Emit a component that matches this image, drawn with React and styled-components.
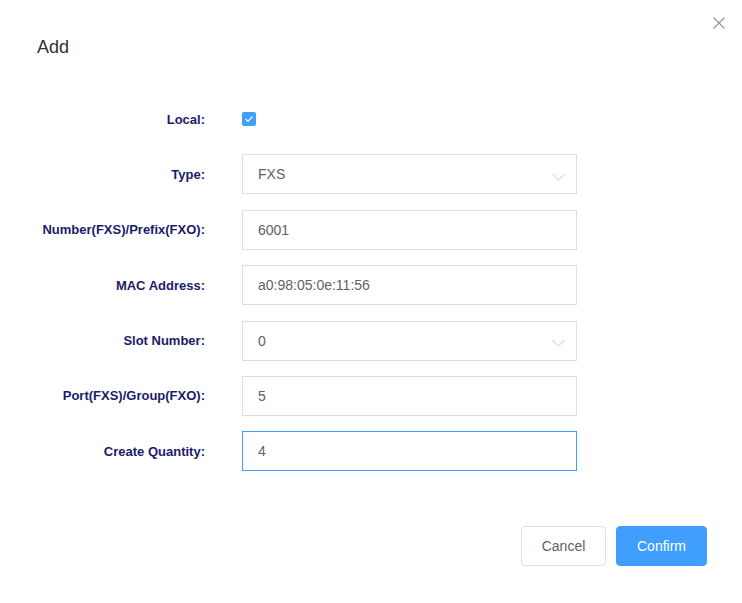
import React from "react";
import styled, { createGlobalStyle } from "styled-components";

const GlobalStyle = createGlobalStyle`
  html, body {
    margin: 0;
    padding: 0;
    background: #ffffff;
    font-family: "Liberation Sans", Arial, sans-serif;
  }
`;

const fields = [
  { label: "Type:", value: "FXS", kind: "select" },
  { label: "Number(FXS)/Prefix(FXO):", value: "6001", kind: "input" },
  { label: "MAC Address:", value: "a0:98:05:0e:11:56", kind: "input" },
  { label: "Slot Number:", value: "0", kind: "select" },
  { label: "Port(FXS)/Group(FXO):", value: "5", kind: "input" },
  { label: "Create Quantity:", value: "4", kind: "input", focused: true },
];

const Chevron = () => (
  <svg width="13" height="8" viewBox="0 0 13 8">
    <path d="M0.5 1 L6.5 7 L12.5 1" fill="none" stroke="#c0c4cc" strokeWidth="1" />
  </svg>
);

const CloseIcon = () => (
  <svg width="12" height="12" viewBox="0 0 12 12">
    <path d="M0.5 0.5 L11.5 11.5 M11.5 0.5 L0.5 11.5" stroke="#909399" strokeWidth="1.1" />
  </svg>
);

const CheckIcon = () => (
  <svg width="10" height="8" viewBox="0 0 10 8">
    <path d="M1.5 4 L4 6.5 L8.5 1.5" fill="none" stroke="#ffffff" strokeWidth="1.2" />
  </svg>
);

const App = () => {
  return (
    <Dialog>
      <GlobalStyle />
      <Header>
        <Title>Add</Title>
        <CloseButton aria-label="close">
          <CloseIcon />
        </CloseButton>
      </Header>
      <Form>
        <Row>
          <Label>Local:</Label>
          <Field>
            <Checkbox>
              <CheckIcon />
            </Checkbox>
          </Field>
        </Row>
        {fields.map((f) => (
          <Row key={f.label}>
            <Label>{f.label}</Label>
            <Field>
              <InputBox focused={f.focused}>
                <span>{f.value}</span>
                {f.kind === "select" && (
                  <ArrowWrap>
                    <Chevron />
                  </ArrowWrap>
                )}
              </InputBox>
            </Field>
          </Row>
        ))}
      </Form>
      <Footer>
        <Button>Cancel</Button>
        <Button primary>Confirm</Button>
      </Footer>
    </Dialog>
  );
};

const Dialog = styled.div`
  width: 742px;
  height: 603px;
  display: flex;
  flex-direction: column;
  box-sizing: border-box;
`;

const Header = styled.div`
  display: flex;
  justify-content: space-between;
  align-items: flex-start;
  padding: 35px 17px 0 37px;
  height: 98px;
  box-sizing: border-box;
`;

const Title = styled.div`
  font-size: 18px;
  line-height: 24px;
  color: #303133;
`;

const CloseButton = styled.button`
  border: none;
  background: none;
  padding: 0;
  margin-top: -18px;
  width: 12px;
  height: 12px;
  display: flex;
  cursor: pointer;
`;

const Form = styled.div`
  display: flex;
  flex-direction: column;
  gap: 15.4px;
  padding-top: 1px;
`;

const Row = styled.div`
  display: grid;
  grid-template-columns: 205px 335px;
  column-gap: 37px;
  height: 40px;
  align-items: center;
`;

const Label = styled.div`
  text-align: right;
  font-size: 13px;
  font-weight: bold;
  color: #1b1b6b;
`;

const Field = styled.div`
  display: flex;
  align-items: center;
`;

const Checkbox = styled.span`
  width: 14px;
  height: 14px;
  border-radius: 2px;
  background: #409eff;
  display: flex;
  align-items: center;
  justify-content: center;
`;

const InputBox = styled.div`
  width: 335px;
  height: 40px;
  box-sizing: border-box;
  border: 1px solid ${(p) => (p.focused ? "#409eff" : "#dcdfe6")};
  display: flex;
  align-items: center;
  justify-content: space-between;
  padding: 0 11px 0 15px;
  font-size: 14px;
  color: #606266;
`;

const ArrowWrap = styled.span`
  display: flex;
  margin-top: 5px;
`;

const Footer = styled.div`
  display: flex;
  justify-content: flex-end;
  gap: 10px;
  padding: 55px 35px 0 0;
`;

const Button = styled.button`
  height: 40px;
  box-sizing: border-box;
  padding: 0;
  width: ${(p) => (p.primary ? "91px" : "85px")};
  border-radius: 4px;
  border: 1px solid ${(p) => (p.primary ? "#409eff" : "#dcdfe6")};
  background: ${(p) => (p.primary ? "#409eff" : "#ffffff")};
  color: ${(p) => (p.primary ? "#ffffff" : "#606266")};
  font-family: "Liberation Sans", Arial, sans-serif;
  font-size: 14px;
  cursor: pointer;
`;

export default App;
